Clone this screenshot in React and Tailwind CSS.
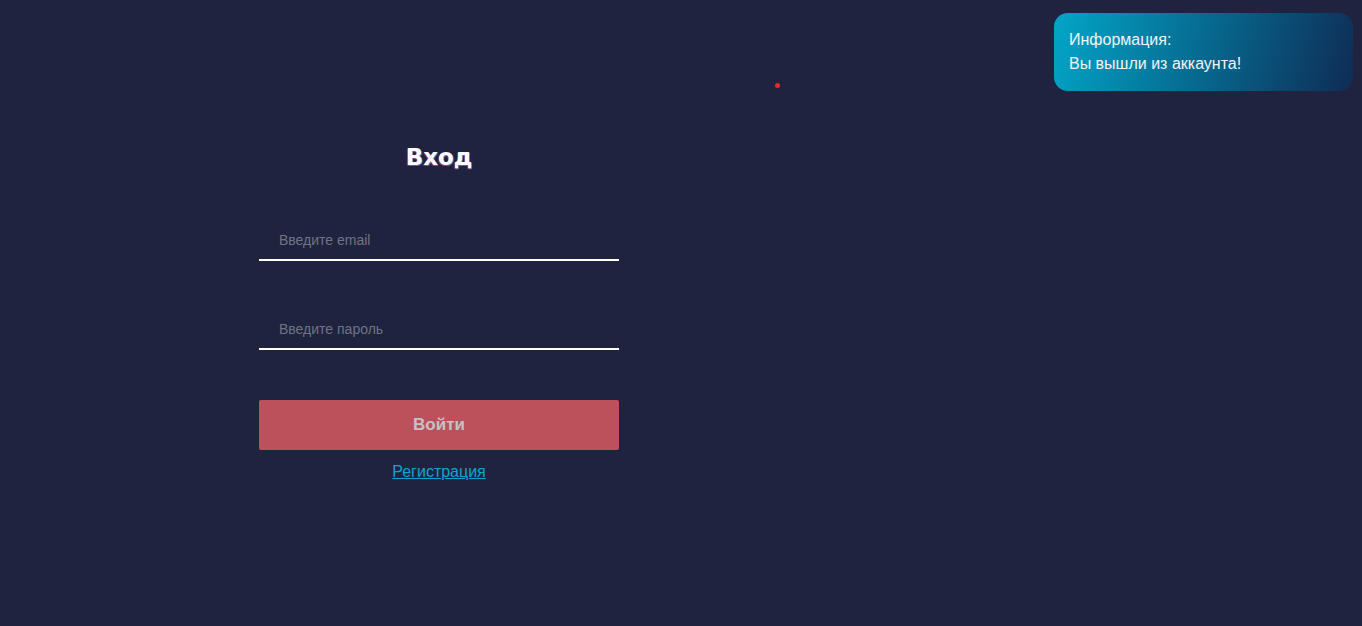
import React from 'react';

function Toast() {
  return (
    <div className="absolute top-[13px] right-[9px] w-[299px] h-[78px] rounded-[14px] bg-[linear-gradient(105deg,#02a6c8_0%,#066f95_45%,#0e2c55_100%)] px-[15px] pt-[15px] text-[16px] leading-[24px] text-[#f2f4f8] font-['Liberation_Sans',Arial,sans-serif]">
      <p>Информация:</p>
      <p>Вы вышли из аккаунта!</p>
    </div>
  );
}

export default function App() {
  return (
    <div className="relative min-h-screen w-full bg-[#20233f] font-['Liberation_Sans',Arial,sans-serif] overflow-hidden">
      <Toast />

      {/* decorative dot */}
      <span className="absolute left-[775px] top-[83px] w-[5px] h-[5px] rounded-full bg-[#f0262c]" />

      <main className="ml-[259px] w-[360px] pt-[142px] flex flex-col">
        <h1 className="text-center text-[23px] leading-[30px] font-bold text-white font-['DejaVu_Sans',sans-serif] [text-shadow:-1px_1px_0_rgba(255,40,90,0.55),1px_1px_0_rgba(40,170,255,0.55)]">
          Вход
        </h1>

        <input
          type="email"
          placeholder="Введите email"
          className="mt-[49px] h-[40px] w-full bg-transparent border-b-2 border-white px-[20px] text-[14px] text-white placeholder:text-[#6f7480] outline-none"
        />

        <input
          type="password"
          placeholder="Введите пароль"
          className="mt-[49px] h-[40px] w-full bg-transparent border-b-2 border-white px-[20px] text-[14px] text-white placeholder:text-[#6f7480] outline-none"
        />

        <button
          type="button"
          className="mt-[50px] h-[50px] w-full rounded-[2px] bg-[#bc515b] text-[17px] font-bold text-[#c4c2c8]"
        >
          Войти
        </button>

        <a href="#" className="mt-[11px] self-center text-[16px] leading-[22px] text-[#0ea5cf] underline">
          Регистрация
        </a>
      </main>
    </div>
  );
}
